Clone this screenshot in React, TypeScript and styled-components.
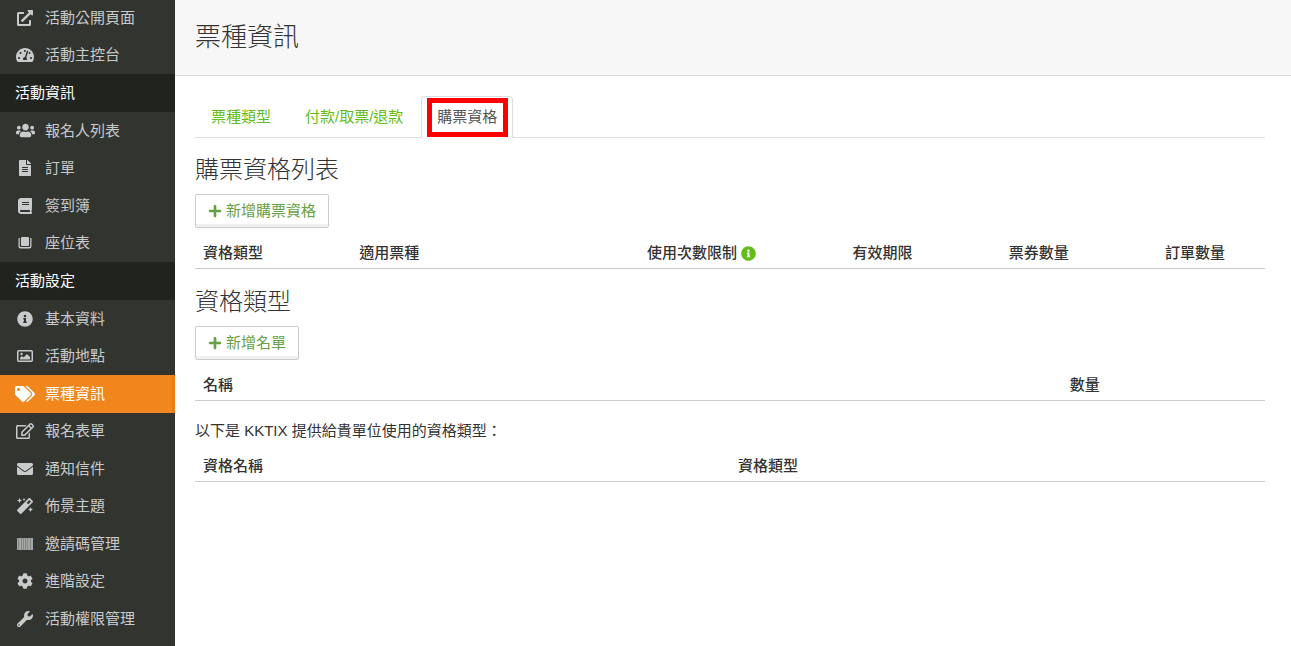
import React from 'react';
import styled, { createGlobalStyle, css } from 'styled-components';
import type { IconType } from 'react-icons';
import {
  FaBook,
  FaCog,
  FaEnvelope,
  FaExternalLinkAlt,
  FaFileAlt,
  FaInfoCircle,
  FaMagic,
  FaPlus,
  FaRegEdit,
  FaTachometerAlt,
  FaTags,
  FaUsers,
  FaWrench,
} from 'react-icons/fa';

const GlobalStyle = createGlobalStyle`
  *, *::before, *::after { box-sizing: border-box; }
  body {
    margin: 0;
    background: #fff;
    color: #333;
    font-family: "Liberation Sans", "Noto Sans CJK TC", sans-serif;
    font-size: 15px;
    line-height: 20px;
  }
`;

const Page = styled.div`
  display: flex;
  min-height: 100vh;
`;

const Sidebar = styled.nav`
  flex: 0 0 175px;
  margin-top: -1px;
  background: #32342f;
`;

const GroupTitle = styled.h2`
  display: flex;
  align-items: center;
  height: 38px;
  margin: 0;
  padding: 0 15px;
  background: #21231f;
  color: #fff;
  font-size: 15px;
  font-weight: 400;
`;

const MenuList = styled.ul`
  margin: 0;
  padding: 0;
  list-style: none;
`;

const MenuItem = styled.li`
  height: 37px;

  &:nth-child(odd) {
    height: 38px;
  }
`;

const MenuLink = styled.a<{ $active?: boolean }>`
  display: flex;
  align-items: center;
  gap: 10px;
  height: 100%;
  padding: 0 15px 1px;
  color: #c8cacc;
  text-decoration: none;

  ${({ $active }) =>
    $active &&
    css`
      background: #f0861c;
      border-right: 3px solid #ee7d11;
      color: #fff;
    `}
`;

const MenuIcon = styled.span`
  display: flex;
  flex: 0 0 20px;
  justify-content: center;
`;

const Main = styled.main`
  flex: 1;
  min-width: 0;
`;

const PageHeader = styled.header`
  display: flex;
  align-items: center;
  height: 76px;
  padding: 0 20px 2px;
  background: #f7f7f7;
  border-bottom: 1px solid #d9d9d9;
`;

const PageTitle = styled.h1`
  margin: 0;
  font-size: 26px;
  font-weight: 300;
  line-height: 32px;
`;

const Content = styled.div`
  padding: 20px 26px 20px 20px;
`;

const Tabs = styled.ul`
  display: flex;
  gap: 2px;
  margin: 0 0 20px;
  padding: 0;
  border-bottom: 1px solid #ddd;
  list-style: none;
`;

const Tab = styled.li`
  position: relative;
  margin-bottom: -1px;
`;

const TabLink = styled.a<{ $active?: boolean }>`
  display: block;
  padding: 10px 15px;
  border: 1px solid transparent;
  border-radius: 4px 4px 0 0;
  color: #62bd19;
  text-decoration: none;

  ${({ $active }) =>
    $active &&
    css`
      background: #fff;
      border-color: #ddd #ddd #fff;
      color: #555;
    `}
`;

const TabHighlight = styled.span`
  position: absolute;
  inset: 2px 5px 1px 6px;
  border: 5px solid #f00;
  pointer-events: none;
`;

const SectionTitle = styled.h2`
  margin: 0 0 12px;
  font-size: 24px;
  font-weight: 300;
  line-height: 24px;
`;

const AddButton = styled.button`
  display: flex;
  align-items: center;
  gap: 4px;
  height: 34px;
  padding: 0 12px 1px;
  border: 1px solid #ccc;
  border-radius: 2px;
  background: #fff;
  box-shadow: inset 0 -3px 0 #f0f0f0;
  color: #65a046;
  font: inherit;
  cursor: pointer;
`;

const Table = styled.table`
  width: 100%;
  margin: 8px 0 21px;
  border-collapse: separate;
  border-spacing: 0;
  table-layout: fixed;
`;

const HeadCell = styled.th<{ $width: string }>`
  width: ${({ $width }) => $width};
  padding: 9px 8px 7px;
  border-bottom: 1px solid #ccc;
  font-weight: 500;
  line-height: 16px;
  text-align: left;
  white-space: nowrap;
`;

const HeadLabel = styled.span`
  display: flex;
  align-items: center;
  gap: 4px;
`;

const HelpIcon = styled(FaInfoCircle)`
  color: #62bd19;
`;

const Note = styled.p`
  margin: 0;
  padding-bottom: 2px;
  line-height: 17px;
`;

const SeatMapIcon = () => (
  <svg width="14" height="14" viewBox="0 0 14 14" fill="currentColor" aria-hidden="true">
    <rect x="3" y="1" width="8" height="9" rx="1" />
    <path d="M0.5 2H1.8V10.2Q1.8 11 2.6 11H11.4Q12.2 11 12.2 10.2V2H13.5V10.5Q13.5 12.5 11.5 12.5H2.5Q0.5 12.5 0.5 10.5Z" />
  </svg>
);

const PictureIcon = () => (
  <svg width="16" height="14" viewBox="0 0 16 14" aria-hidden="true">
    <rect x="0.75" y="1.75" width="14.5" height="10.5" rx="1" fill="none" stroke="currentColor" strokeWidth="1.5" />
    <circle cx="4.5" cy="5" r="1.2" fill="currentColor" />
    <path d="M3 10.5V9L5 7L6.5 8.5L10 5L13 8V10.5Z" fill="currentColor" />
  </svg>
);

const BarcodeIcon = () => (
  <svg width="16" height="12" viewBox="0 0 16 12" fill="currentColor" aria-hidden="true">
    <rect width="16" height="12" opacity="0.55" />
    <path
      d="M0 0h1v12H0zM2 0h2v12H2zM5 0h1v12H5zM7 0h1v12H7zM9 0h1v12H9zM11 0h2v12h-2zM14 0h2v12h-2z"
      opacity="0.5"
    />
  </svg>
);

interface Entry {
  label: string;
  icon: IconType | (() => React.JSX.Element);
  size?: number;
  active?: boolean;
}

const topEntries: Entry[] = [
  { label: '活動公開頁面', icon: FaExternalLinkAlt, size: 16 },
  { label: '活動主控台', icon: FaTachometerAlt, size: 18 },
];

const infoEntries: Entry[] = [
  { label: '報名人列表', icon: FaUsers, size: 19 },
  { label: '訂單', icon: FaFileAlt, size: 16 },
  { label: '簽到簿', icon: FaBook, size: 16 },
  { label: '座位表', icon: SeatMapIcon },
];

const settingEntries: Entry[] = [
  { label: '基本資料', icon: FaInfoCircle, size: 16 },
  { label: '活動地點', icon: PictureIcon },
  { label: '票種資訊', icon: FaTags, size: 20, active: true },
  { label: '報名表單', icon: FaRegEdit, size: 18 },
  { label: '通知信件', icon: FaEnvelope, size: 16 },
  { label: '佈景主題', icon: FaMagic, size: 16 },
  { label: '邀請碼管理', icon: BarcodeIcon },
  { label: '進階設定', icon: FaCog, size: 16 },
  { label: '活動權限管理', icon: FaWrench, size: 16 },
];

const Menu = ({ entries }: { entries: Entry[] }) => (
  <MenuList>
    {entries.map(({ label, icon: Icon, size, active }) => (
      <MenuItem key={label}>
        <MenuLink href="#" $active={active} aria-current={active ? 'page' : undefined}>
          <MenuIcon>
            <Icon size={size} />
          </MenuIcon>
          {label}
        </MenuLink>
      </MenuItem>
    ))}
  </MenuList>
);

interface Column {
  label: string;
  width: string;
  help?: boolean;
}

const ruleColumns: Column[] = [
  { label: '資格類型', width: '14.6%' },
  { label: '適用票種', width: '26.9%' },
  { label: '使用次數限制', width: '19.2%', help: true },
  { label: '有效期限', width: '14.6%' },
  { label: '票券數量', width: '14.6%' },
  { label: '訂單數量', width: '10.1%' },
];

const listColumns: Column[] = [
  { label: '名稱', width: '81%' },
  { label: '數量', width: '19%' },
];

const providedColumns: Column[] = [
  { label: '資格名稱', width: '50%' },
  { label: '資格類型', width: '50%' },
];

const HeadTable = ({ columns }: { columns: Column[] }) => (
  <Table>
    <thead>
      <tr>
        {columns.map(({ label, width, help }) => (
          <HeadCell key={label} scope="col" $width={width}>
            <HeadLabel>
              {label}
              {help && <HelpIcon size={15} aria-hidden="true" />}
            </HeadLabel>
          </HeadCell>
        ))}
      </tr>
    </thead>
  </Table>
);

export default function App() {
  return (
    <>
      <GlobalStyle />
      <Page>
        <Sidebar>
          <Menu entries={topEntries} />
          <GroupTitle>活動資訊</GroupTitle>
          <Menu entries={infoEntries} />
          <GroupTitle>活動設定</GroupTitle>
          <Menu entries={settingEntries} />
        </Sidebar>
        <Main>
          <PageHeader>
            <PageTitle>票種資訊</PageTitle>
          </PageHeader>
          <Content>
            <Tabs>
              <Tab>
                <TabLink href="#">票種類型</TabLink>
              </Tab>
              <Tab>
                <TabLink href="#">付款/取票/退款</TabLink>
              </Tab>
              <Tab>
                <TabLink href="#" $active aria-current="page">
                  購票資格
                </TabLink>
                <TabHighlight />
              </Tab>
            </Tabs>

            <SectionTitle>購票資格列表</SectionTitle>
            <AddButton type="button">
              <FaPlus size={14} />
              新增購票資格
            </AddButton>
            <HeadTable columns={ruleColumns} />

            <SectionTitle>資格類型</SectionTitle>
            <AddButton type="button">
              <FaPlus size={14} />
              新增名單
            </AddButton>
            <HeadTable columns={listColumns} />

            <Note>以下是 KKTIX 提供給貴單位使用的資格類型：</Note>
            <HeadTable columns={providedColumns} />
          </Content>
        </Main>
      </Page>
    </>
  );
}
